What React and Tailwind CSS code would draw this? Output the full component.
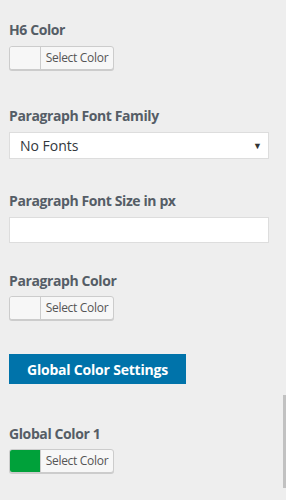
function ColorPicker({ color }) {
    return (
        <button
            type="button"
            className="flex h-[24px] w-[105px] items-stretch overflow-hidden rounded-[3px] border border-[#cccccc] bg-[#f7f7f7] shadow-[0_1px_0_#cccccc]"
        >
            <span className="w-[31px] border-r border-[#cccccc]" style={{ backgroundColor: color }} />
            <span className="flex flex-1 items-center justify-center text-[12px] tracking-[-0.3px] text-[#555555]">Select Color</span>
        </button>
    );
}

function Label({ children }) {
    return <div className="text-[14px] font-bold leading-[20px] tracking-[-0.4px] text-[#555d66]">{children}</div>;
}

export default function App() {
    return (
        <div
            className="relative h-[500px] w-[286px] overflow-hidden bg-[#eeeeee] px-[9px]"
            style={{ fontFamily: '"Open Sans", "Noto Sans", sans-serif' }}
        >
            <div className="pt-[20px]">
                <Label>H6 Color</Label>
                <div className="mt-[6px]">
                    <ColorPicker color="#f7f7f7" />
                </div>
            </div>

            <div className="mt-[36px]">
                <Label>Paragraph Font Family</Label>
                <div className="mt-[6px] flex h-[27px] w-[260px] items-center justify-between border border-[#dddddd] bg-white pl-[10px] pr-[6px] text-[14px] text-[#32373c]">
                    <span>No Fonts</span>
                    <span className="text-[9px] text-[#333333]">▼</span>
                </div>
            </div>

            <div className="mt-[32px]">
                <Label>Paragraph Font Size in px</Label>
                <div className="mt-[6px] h-[26px] w-[260px] border border-[#dddddd] bg-white" />
            </div>

            <div className="mt-[28px]">
                <Label>Paragraph Color</Label>
                <div className="mt-[5px]">
                    <ColorPicker color="#f7f7f7" />
                </div>
            </div>

            <button
                type="button"
                className="mt-[34px] flex h-[30px] w-[177px] items-center justify-center bg-[#0073aa] text-[14px] font-bold tracking-[-0.2px] text-white"
            >
                Global Color Settings
            </button>

            <div className="mt-[40px]">
                <Label>Global Color 1</Label>
                <div className="mt-[5px]">
                    <ColorPicker color="#00a13a" />
                </div>
            </div>

            <div className="absolute right-0 top-[395px] h-[93px] w-[3px] bg-[#c1c1c1]" />
        </div>
    );
}
